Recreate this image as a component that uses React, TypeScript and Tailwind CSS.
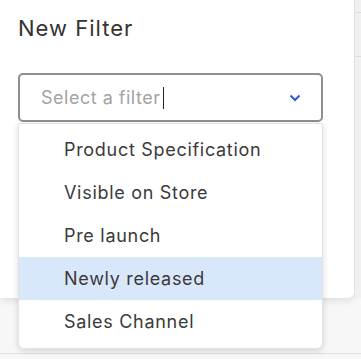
import React from "react";

export default function App() {
  const items = ["Product Specification", "Visible on Store", "Pre launch", "Newly released", "Sales Channel"];
  return (
    <div className="relative w-[361px] h-[359px] overflow-hidden bg-[#f7f7f7]" style={{ fontFamily: "Inter, 'Noto Sans', sans-serif" }}>
      <div className="flex h-[298px]">
        <div className="w-[354px] h-full bg-white rounded-br-[6px] shadow-[0_2px_8px_rgba(0,0,0,0.12)] pt-[14px] pl-[18px]">
          <h1 className="text-[22px] leading-[28px] tracking-[1px] text-[#333]">New Filter</h1>
          <div className="mt-[31px] w-[305px] h-[49px] border-2 border-[#8f8f8f] rounded-[5px] flex items-center pl-[21px] pr-[20px]">
            <span className="text-[18px] tracking-[0.5px] text-[#a3a3a3]">Select a filter</span>
            <span className="ml-[3px] w-[1px] h-[22px] bg-[#222]" />
            <svg className="ml-auto" width="12" height="8" viewBox="0 0 12 8">
              <path d="M1.5 1.5 L6 6 L10.5 1.5" fill="none" stroke="#2a5bd7" strokeWidth="2" />
            </svg>
          </div>
        </div>
        <div className="flex-1 bg-[#f0f0f0] border-l border-[#e2e2e2] flex flex-col">
          <div className="h-[13px] border-b border-[#dcdcdc]" />
          <div className="h-[44px] border-b border-[#dcdcdc]" />
        </div>
      </div>
      <div className="absolute left-0 right-0 top-[353px] h-[1px] bg-[#e0e0e0]" />
      <div className="absolute left-[18px] top-[123px] w-[305px] bg-white rounded-b-[6px] border border-[#e4e4e4] shadow-[0_2px_6px_rgba(0,0,0,0.15)] pt-[4px] pb-[5px]">
        {items.map((t) => (
          <div key={t} className={`h-[43px] flex items-center pl-[45px] text-[18px] tracking-[0.7px] text-[#3a3a3a] ${t === "Newly released" ? "bg-[#d9e7fa]" : ""}`}>
            {t}
          </div>
        ))}
      </div>
    </div>
  );
}
